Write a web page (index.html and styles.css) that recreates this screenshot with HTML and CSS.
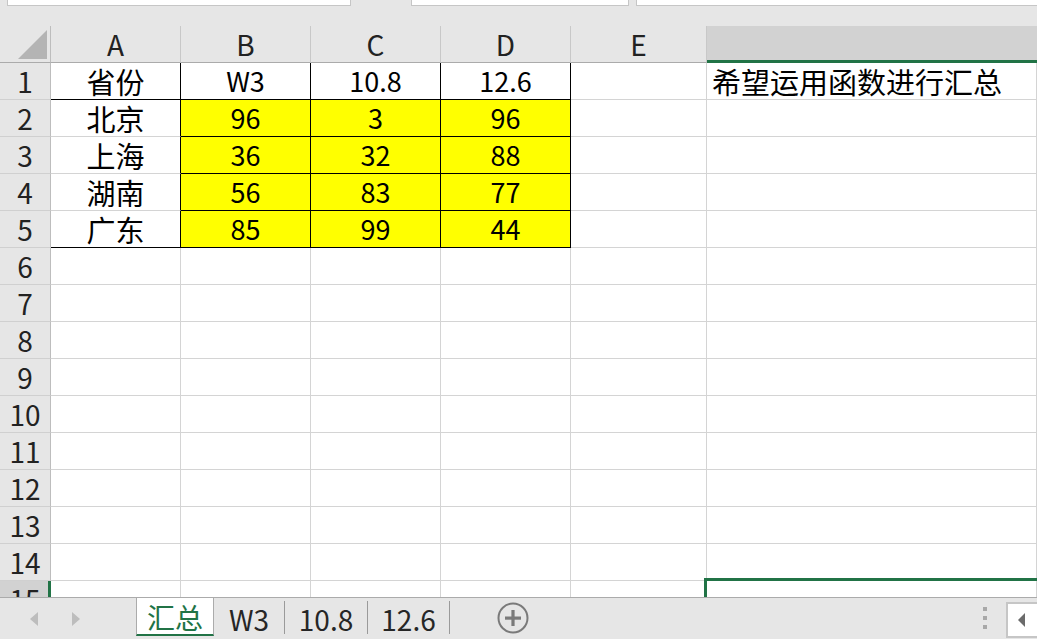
FILE: index.html
```html
<!DOCTYPE html>
<html lang="zh-CN">
<head>
<meta charset="utf-8">
<title>汇总</title>
<link rel="stylesheet" href="styles.css">
</head>
<body>
<div class="app">
  <div class="topbar">
    <div class="box box1"></div>
    <div class="box box2"></div>
    <div class="box box3"></div>
  </div>
  <div class="sheet">
    <div class="corner"><span class="tri"></span></div>
    <div class="ch">A</div><div class="ch">B</div><div class="ch">C</div><div class="ch">D</div><div class="ch">E</div><div class="ch sel-col"></div>

    <div class="rh">1</div>
    <div class="c cj bk-r bk-b">省份</div>
    <div class="c bk-r bk-b">W3</div>
    <div class="c bk-r bk-b">10.8</div>
    <div class="c bk-r bk-b">12.6</div>
    <div class="c"></div>
    <div class="c cj left">希望运用函数进行汇总</div>

    <div class="rh">2</div>
    <div class="c cj bk-r">北京</div>
    <div class="c yl bk-r bk-b">96</div>
    <div class="c yl bk-r bk-b">3</div>
    <div class="c yl bk-r bk-b">96</div>
    <div class="c"></div><div class="c"></div>

    <div class="rh">3</div>
    <div class="c cj bk-r">上海</div>
    <div class="c yl bk-r bk-b">36</div>
    <div class="c yl bk-r bk-b">32</div>
    <div class="c yl bk-r bk-b">88</div>
    <div class="c"></div><div class="c"></div>

    <div class="rh">4</div>
    <div class="c cj bk-r">湖南</div>
    <div class="c yl bk-r bk-b">56</div>
    <div class="c yl bk-r bk-b">83</div>
    <div class="c yl bk-r bk-b">77</div>
    <div class="c"></div><div class="c"></div>

    <div class="rh">5</div>
    <div class="c cj bk-r bk-b">广东</div>
    <div class="c yl bk-r bk-b">85</div>
    <div class="c yl bk-r bk-b">99</div>
    <div class="c yl bk-r bk-b">44</div>
    <div class="c"></div><div class="c"></div>

    <div class="rh">6</div><div class="c"></div><div class="c"></div><div class="c"></div><div class="c"></div><div class="c"></div><div class="c"></div>
    <div class="rh">7</div><div class="c"></div><div class="c"></div><div class="c"></div><div class="c"></div><div class="c"></div><div class="c"></div>
    <div class="rh">8</div><div class="c"></div><div class="c"></div><div class="c"></div><div class="c"></div><div class="c"></div><div class="c"></div>
    <div class="rh">9</div><div class="c"></div><div class="c"></div><div class="c"></div><div class="c"></div><div class="c"></div><div class="c"></div>
    <div class="rh">10</div><div class="c"></div><div class="c"></div><div class="c"></div><div class="c"></div><div class="c"></div><div class="c"></div>
    <div class="rh">11</div><div class="c"></div><div class="c"></div><div class="c"></div><div class="c"></div><div class="c"></div><div class="c"></div>
    <div class="rh">12</div><div class="c"></div><div class="c"></div><div class="c"></div><div class="c"></div><div class="c"></div><div class="c"></div>
    <div class="rh">13</div><div class="c"></div><div class="c"></div><div class="c"></div><div class="c"></div><div class="c"></div><div class="c"></div>
    <div class="rh">14</div><div class="c"></div><div class="c"></div><div class="c"></div><div class="c"></div><div class="c"></div><div class="c"></div>
    <div class="rh sel-row">15</div><div class="c"></div><div class="c"></div><div class="c"></div><div class="c"></div><div class="c"></div><div class="c active"></div>
  </div>
  <div class="tabbar">
    <div class="nav">
      <svg class="arr" width="9" height="14" viewBox="0 0 9 14"><polygon points="8,0 8,14 0,7" fill="#bdbdbd"/></svg>
      <svg class="arr arr-r" width="9" height="14" viewBox="0 0 9 14"><polygon points="1,0 1,14 9,7" fill="#bdbdbd"/></svg>
    </div>
    <div class="tab tab-active">汇总</div>
    <div class="tab t1">W3</div>
    <div class="sep"></div>
    <div class="tab t2">10.8</div>
    <div class="sep"></div>
    <div class="tab t3">12.6</div>
    <div class="sep"></div>
    <svg class="plus" width="32" height="32" viewBox="0 0 32 32">
      <circle cx="16" cy="16" r="14.5" fill="none" stroke="#7a7a7a" stroke-width="2"/>
      <rect x="8" y="14.5" width="16" height="3.2" fill="#7a7a7a"/>
      <rect x="14.4" y="8" width="3.2" height="16" fill="#7a7a7a"/>
    </svg>
    <div class="right">
      <div class="dots"><span></span><span></span><span></span></div>
      <div class="scrollbox">
        <svg width="7" height="14" viewBox="0 0 7 14"><polygon points="7,0 7,14 0,7" fill="#6b6b6b"/></svg>
      </div>
    </div>
  </div>
</div>
</body>
</html>
```

FILE: styles.css
```css
* { box-sizing: border-box; }
html, body {
  margin: 0;
  padding: 0;
  background: #ffffff;
}
body {
  width: 1037px;
  height: 639px;
  overflow: hidden;
  font-family: "Noto Sans CJK SC", "Noto Sans", sans-serif;
  color: #000;
}
.app {
  width: 1037px;
  height: 639px;
  display: flex;
  flex-direction: column;
  overflow: hidden;
}
.topbar {
  height: 26px;
  flex: none;
  background: #e6e6e6;
  display: flex;
  align-items: flex-start;
}
.box {
  height: 6px;
  background: #fff;
  border: 1px solid #c6c6c6;
  border-top: none;
}
.box1 { margin-left: 7px; width: 344px; }
.box2 { margin-left: 60px; width: 218px; }
.box3 { margin-left: 7px; flex: 1; border-right: none; }

.sheet {
  flex: none;
  height: 571px;
  overflow: hidden;
  display: grid;
  grid-template-columns: 51px 130px 130px 130px 130px 136px 330px;
  grid-auto-rows: 37px;
  font-size: 27px;
}
.corner, .ch, .rh, .c {
  border-right: 1px solid #d4d4d4;
  border-bottom: 1px solid #d4d4d4;
}
.corner {
  background: #e6e6e6;
  border-right: 1px solid #bdbdbd;
  border-bottom: 1px solid #ababab;
  position: relative;
}
.tri {
  position: absolute;
  left: 18px;
  top: 4px;
  width: 29px;
  height: 29px;
  background: #b4b4b4;
  clip-path: polygon(100% 0, 100% 100%, 0 100%);
}
.ch {
  background: #e6e6e6;
  border-right-color: #c8c8c8;
  border-bottom-color: #ababab;
  text-align: center;
  line-height: 36px;
  color: #222;
  font-size: 28px;
}
.ch.sel-col {
  background: #d2d2d2;
  border-bottom: 3px solid #217346;
  border-right: none;
}
.rh {
  background: #e6e6e6;
  border-right-color: #bdbdbd;
  border-bottom-color: #d0d0d0;
  text-align: center;
  line-height: 36px;
  color: #222;
  font-size: 28px;
}
.rh.sel-row {
  background: #d2d2d2;
  border-right: 3px solid #217346;
  padding-left: 2px;
}
.c {
  text-align: center;
  line-height: 36px;
  white-space: nowrap;
}
.c.cj { font-size: 29px; }
.c.left {
  text-align: left;
  padding-left: 5px;
  overflow: visible;
}
.bk-r { border-right-color: #000; }
.bk-b { border-bottom-color: #000; }
.yl { background: #ffff00; }
.c.active { position: relative; }
.c.active::before {
  content: "";
  position: absolute;
  left: -3px;
  top: -3px;
  width: 400px;
  height: 100px;
  border-top: 3px solid #217346;
  border-left: 3px solid #217346;
}

.tabbar {
  flex: 1;
  background: #e6e6e6;
  border-top: 1px solid #ababab;
  display: flex;
  align-items: stretch;
  font-size: 28px;
  color: #262626;
}
.nav {
  width: 136px;
  display: flex;
  align-items: center;
  padding-left: 30px;
  gap: 32px;
}
.tab {
  display: flex;
  align-items: center;
  justify-content: center;
  line-height: 1;
}
.tab-active {
  width: 78px;
  background: #fff;
  color: #217346;
  border-left: 1px solid #ababab;
  border-right: 1px solid #ababab;
  border-bottom: 2px solid #217346;
  margin-bottom: 3px;
  padding-top: 2px;
}
.t1 { width: 70px; }
.t2 { width: 82px; }
.t3 { width: 81px; }
.sep {
  width: 1px;
  background: #9a9a9a;
  margin: 3px 0 5px;
}
.plus {
  align-self: center;
  margin-left: 47px;
  margin-top: -2px;
}
.right {
  margin-left: auto;
  display: flex;
  align-items: stretch;
}
.dots {
  display: flex;
  flex-direction: column;
  justify-content: center;
  gap: 5px;
  margin-right: 19px;
  padding-bottom: 2px;
}
.dots span {
  width: 4px;
  height: 4px;
  background: #a8a8a8;
}
.scrollbox {
  width: 31px;
  margin: 4px 0 1px;
  background: #fff;
  border: 2px solid #c6c6c6;
  border-right: none;
  display: flex;
  align-items: center;
  padding-left: 10px;
}
```
